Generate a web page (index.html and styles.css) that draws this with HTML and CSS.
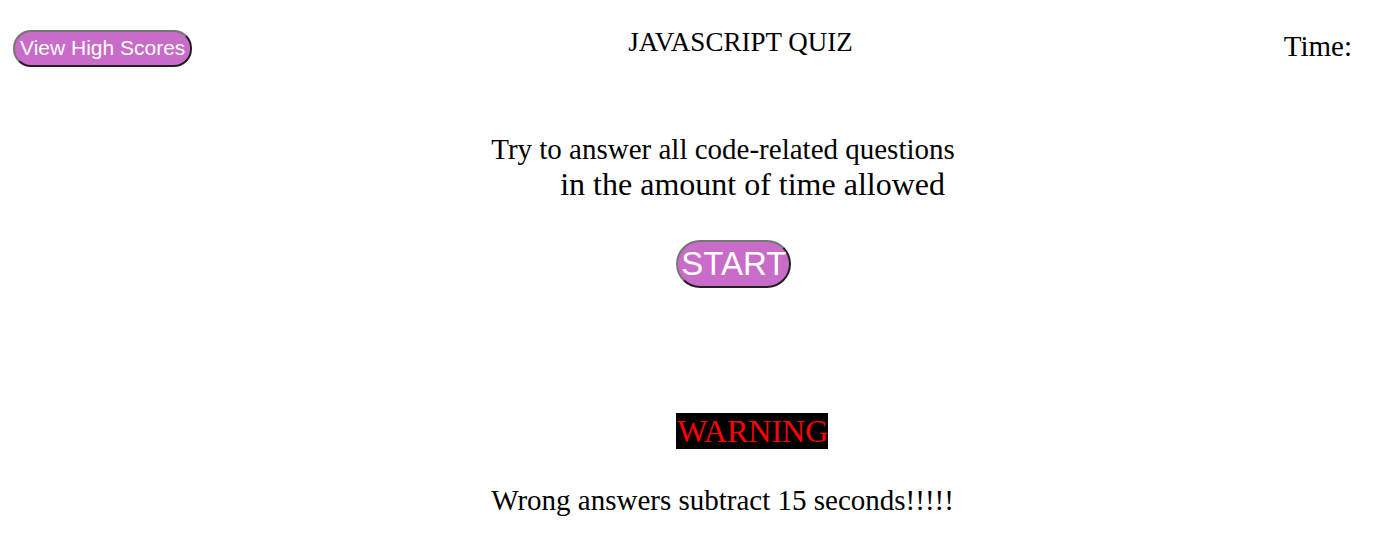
FILE: index.html
```html
<!DOCTYPE html>
<html lang="en">
<head>
<meta charset="utf-8">
<title>JavaScript Quiz</title>
<link rel="stylesheet" href="styles.css">
</head>
<body>
<header class="top-bar">
  <button type="button" class="button scores-button">View High Scores</button>
  <h1 class="title">JAVASCRIPT QUIZ</h1>
  <p class="timer">Time:</p>
</header>
<main class="quiz">
  <p class="intro">Try to answer all code-related questions</p>
  <p class="intro-more">in the amount of time allowed</p>
  <button type="button" class="button start-button">START</button>
  <h2 class="warning">WARNING</h2>
  <p class="penalty">Wrong answers subtract 15 seconds!!!!!</p>
</main>
</body>
</html>
```
FILE: styles.css
```css
* {
  box-sizing: border-box;
}

body {
  margin: 0;
  background: #fff;
  color: #000;
  font-family: "Liberation Serif", "Times New Roman", serif;
}

h1, h2, p {
  margin: 0;
  font-weight: 400;
}

.top-bar {
  display: grid;
  grid-template-columns: 1fr auto 1fr;
  align-items: start;
  padding: 30px 32px 0 13px;
}

.button {
  border: 2px solid;
  border-color: #767676 #212121 #212121 #767676;
  background: #c96bc9;
  color: #fff;
  font-family: "Liberation Sans", Arial, sans-serif;
  white-space: nowrap;
}

.scores-button {
  justify-self: start;
  height: 37px;
  padding: 0 5px 2px;
  border-radius: 18px;
  font-size: 21px;
}

.title {
  margin-left: 116px;
  font-size: 27px;
  line-height: 24px;
}

.timer {
  justify-self: end;
  font-size: 29px;
  line-height: 32px;
}

.quiz {
  display: flex;
  flex-direction: column;
  align-items: flex-start;
  width: fit-content;
  margin: 64px auto 0;
  padding-left: 62px;
}

.intro,
.penalty {
  font-size: 29px;
  line-height: 36px;
}

.intro-more {
  margin-left: 69px;
  font-size: 32px;
  line-height: 34px;
}

.start-button {
  height: 48px;
  margin: 39px 0 125px 185px;
  padding: 0 3px;
  border-radius: 24px;
  font-size: 33px;
}

.warning {
  margin: 0 0 33px 185px;
  padding-left: 1px;
  background: #000;
  color: #f00;
  font-size: 32px;
  line-height: 36px;
}
```
